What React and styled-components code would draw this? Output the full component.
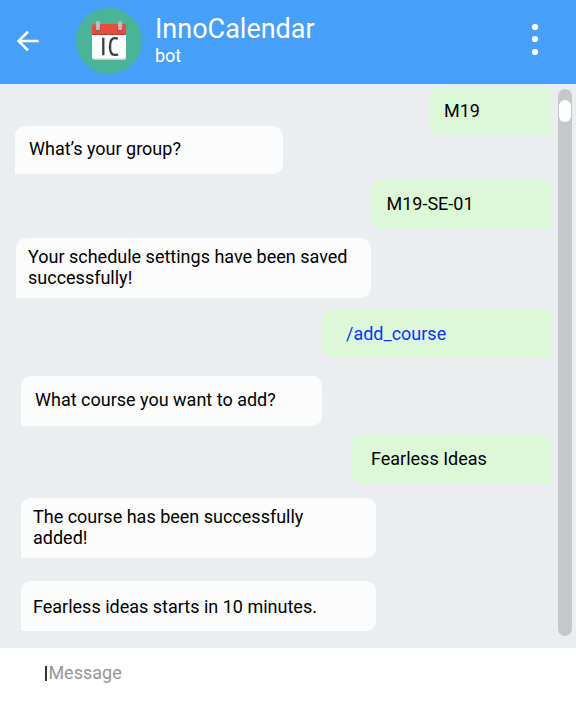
import React from "react";
import styled, { createGlobalStyle } from "styled-components";

const GlobalStyle = createGlobalStyle`
  * { box-sizing: border-box; }
  body { margin: 0; font-family: Roboto, sans-serif; background: #fff; overflow: hidden; }
`;

const Screen = styled.div`
  display: flex;
  flex-direction: column;
  width: 576px;
  height: 721px;
  background: #ffffff;
`;

const Header = styled.header`
  display: flex;
  flex: none;
  height: 84px;
  padding: 0 36px 0 16px;
  background: #46a0f9;
  color: #ffffff;
`;

const BackButton = styled.button`
  display: block;
  width: 24px;
  height: 24px;
  margin: 29px 36px 0 0;
  padding: 0;
  border: 0;
  background: none;
`;

const Avatar = styled.div`
  width: 66px;
  height: 66px;
  margin-top: 8px;
  svg { display: block; }
`;

const Identity = styled.div`
  display: flex;
  flex-direction: column;
  flex: 1;
  padding: 13px 0 0 13px;
`;

const Name = styled.h1`
  margin: 0;
  font-size: 27px;
  line-height: 32px;
  font-weight: 400;
`;

const Role = styled.span`
  font-size: 18px;
  line-height: 21px;
`;

const MenuButton = styled.button`
  width: 10px;
  height: 34px;
  margin-top: 23px;
  padding: 0;
  border: 0;
  background: none;
  svg { display: block; }
`;

const Chat = styled.main`
  display: flex;
  flex: none;
  height: 564px;
  background: #eaeef1;
`;

const Messages = styled.div`
  display: flex;
  flex-direction: column;
  width: 552px;
  padding-top: 3px;
`;

const Bubble = styled.div`
  display: flex;
  flex: none;
  align-items: center;
  align-self: ${(p) => (p.$sent ? "flex-end" : "flex-start")};
  width: ${(p) => p.$width}px;
  height: ${(p) => p.$height || 48}px;
  margin: ${(p) => p.$gap || 0}px 0 0 ${(p) => p.$indent || 0}px;
  padding: 0 12px ${(p) => p.$lift || 0}px ${(p) => p.$pad}px;
  border-radius: ${(p) => (p.$sent ? "10px 10px 0 10px" : "10px 10px 10px 0")};
  background: ${(p) => (p.$sent ? "#dcf9d7" : "#fcfcfc")};
  color: ${(p) => (p.$command ? "#0b35f5" : "#000000")};
  font-size: 18px;
  line-height: 21px;
  white-space: pre-line;
`;

const ScrollTrack = styled.div`
  width: 14px;
  height: 547px;
  margin: 5px 0 0 6px;
  padding: 11px 1px 0;
  border-radius: 7px;
  background: #c7c7c7;
`;

const ScrollThumb = styled.div`
  height: 22px;
  border-radius: 6px;
  background: #ffffff;
`;

const Composer = styled.footer`
  display: flex;
  flex: 1;
  align-items: flex-start;
  padding: 14px 0 0 45px;
  color: #969696;
  font-size: 18px;
  line-height: 21px;
`;

const Caret = styled.span`
  width: 2px;
  height: 15px;
  margin: 4px 1.4px 0 0;
  background: #333333;
`;

const messages = [
  { text: "M19", sent: true, width: 122, pad: 14, lift: 2 },
  { text: "What’s your group?", width: 268, indent: 15, pad: 14, gap: -9, lift: 4 },
  { text: "M19-SE-01", sent: true, width: 181, pad: 15.5, gap: 6, lift: 2 },
  { text: "Your schedule settings have been saved\nsuccessfully!", width: 355, height: 60, indent: 16, pad: 12, gap: 10, lift: 2 },
  { text: "/add_course", sent: true, command: true, width: 230, pad: 24, gap: 11 },
  { text: "What course you want to add?", width: 301, height: 50, indent: 21, pad: 14, gap: 19, lift: 4 },
  { text: "Fearless Ideas", sent: true, width: 200, pad: 19, gap: 9, lift: 2 },
  { text: "The course has been successfully\nadded!", width: 355, height: 60, indent: 21, pad: 12, gap: 15, lift: 2 },
  { text: "Fearless ideas starts in 10 minutes.", width: 355, height: 50, indent: 21, pad: 12, gap: 23 },
];

function BackArrow() {
  return (
    <svg width="24" height="24" viewBox="0 0 24 24" fill="none" stroke="#fff" strokeWidth="2.6">
      <path d="M22.7 12H2.5M12 2.6L2.6 12l9.4 9.4" />
    </svg>
  );
}

function CalendarLogo() {
  return (
    <svg width="66" height="66" viewBox="0 0 66 66">
      <circle cx="33" cy="33" r="33" fill="#4ab499" />
      <rect x="16" y="18" width="34" height="34" rx="2.5" fill="#c9d0d1" />
      <path d="M16 26h34v22.5a2 2 0 0 1-2 2H18a2 2 0 0 1-2-2z" fill="#fff" />
      <path d="M16 27v-8.5a2.5 2.5 0 0 1 2.5-2.5h29a2.5 2.5 0 0 1 2.5 2.5V27z" fill="#e74c3c" />
      <path d="M16 26.4h34" stroke="#bd3e31" strokeWidth="1.2" />
      <circle cx="22" cy="20.5" r="2.8" fill="#bd3e31" />
      <circle cx="44" cy="20.5" r="2.8" fill="#bd3e31" />
      <rect x="19.8" y="13" width="4.2" height="9.3" rx="1.9" fill="#b3bcc0" />
      <rect x="42" y="13" width="4.2" height="9.3" rx="1.9" fill="#b3bcc0" />
      <path
        d="M27.3 29.7v17.6M41.8 30.6Q40.2 30 38.6 30.1Q34 30.3 34 38.5Q34 46.8 38.6 46.9Q40.5 47 42 46.2"
        fill="none"
        stroke="#35403f"
        strokeWidth="2.3"
      />
    </svg>
  );
}

function MoreDots() {
  return (
    <svg width="10" height="34" viewBox="0 0 10 34" fill="#fff">
      <circle cx="5" cy="4" r="3.1" />
      <circle cx="5" cy="16" r="3.1" />
      <circle cx="5" cy="29" r="3.1" />
    </svg>
  );
}

export default function App() {
  return (
    <Screen>
      <GlobalStyle />
      <Header>
        <BackButton aria-label="Back"><BackArrow /></BackButton>
        <Avatar><CalendarLogo /></Avatar>
        <Identity>
          <Name>InnoCalendar</Name>
          <Role>bot</Role>
        </Identity>
        <MenuButton aria-label="Menu"><MoreDots /></MenuButton>
      </Header>
      <Chat>
        <Messages>
          {messages.map((m) => (
            <Bubble
              key={m.text}
              $sent={m.sent}
              $command={m.command}
              $width={m.width}
              $height={m.height}
              $indent={m.indent}
              $pad={m.pad}
              $gap={m.gap}
              $lift={m.lift}
            >
              {m.text}
            </Bubble>
          ))}
        </Messages>
        <ScrollTrack><ScrollThumb /></ScrollTrack>
      </Chat>
      <Composer>
        <Caret />
        Message
      </Composer>
    </Screen>
  );
}
